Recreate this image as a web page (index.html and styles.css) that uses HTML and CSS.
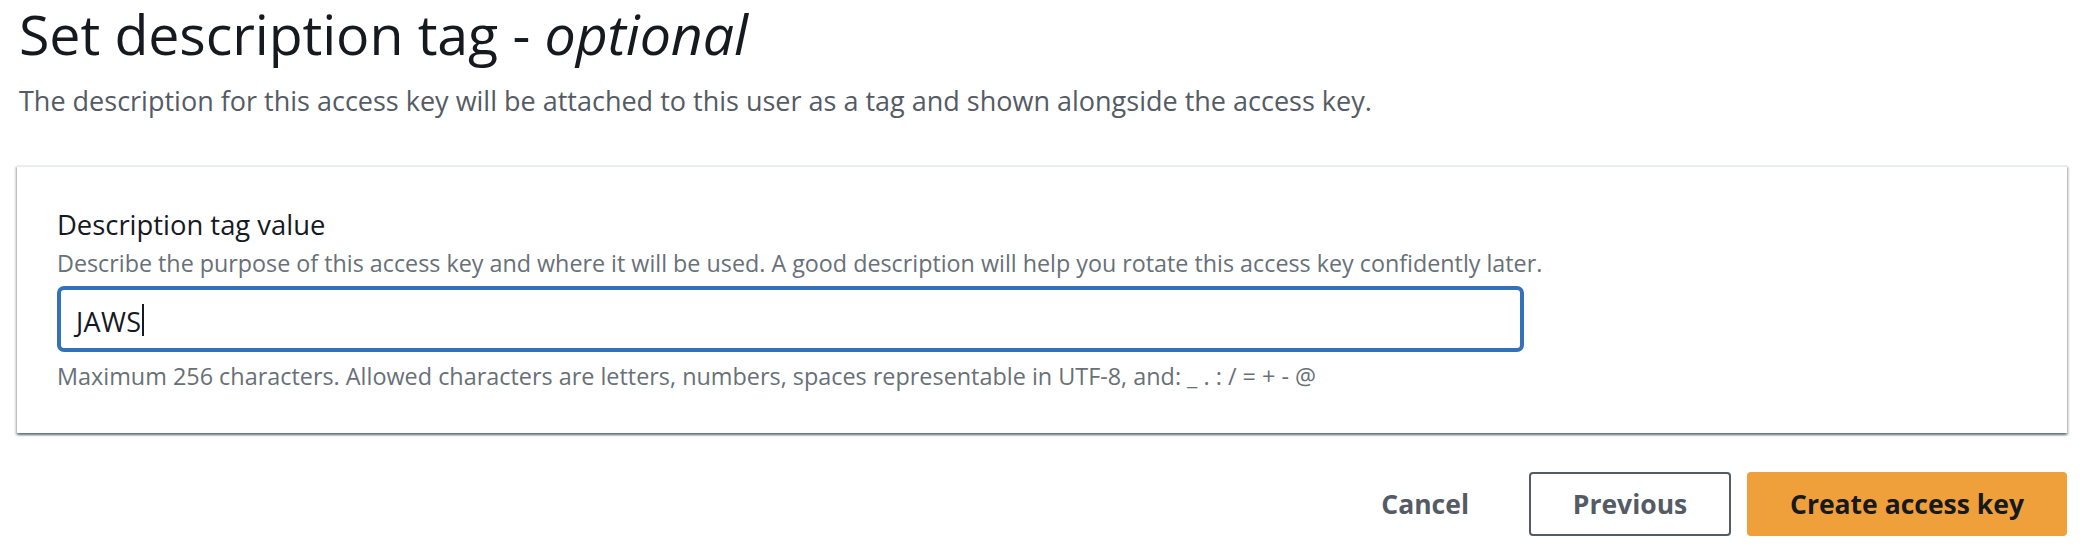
FILE: index.html
```html
<!DOCTYPE html>
<html lang="en">
<head>
<meta charset="utf-8">
<title>Set description tag</title>
<link rel="stylesheet" href="styles.css">
</head>
<body>
<div class="page">
  <header class="page-header">
    <h1 class="page-title">Set description tag - <em class="title-optional">optional</em></h1>
    <p class="page-desc">The description for this access key will be attached to this user as a tag and shown alongside the access key.</p>
  </header>

  <section class="card">
    <div class="field">
      <label class="field-label">Description tag value</label>
      <div class="field-help">Describe the purpose of this access key and where it will be used. A good description will help you rotate this access key confidently later.</div>
      <div class="field-input"><span class="input-value">JAWS</span><span class="caret"></span></div>
      <div class="field-constraint">Maximum 256 characters. Allowed characters are letters, numbers, spaces representable in UTF-8, and: _ . : / = + - @</div>
    </div>
  </section>

  <div class="actions">
    <button class="btn btn-link">Cancel</button>
    <button class="btn btn-normal">Previous</button>
    <button class="btn btn-primary">Create access key</button>
  </div>
</div>
</body>
</html>
```
FILE: styles.css
```css
* { box-sizing: border-box; }
html, body { margin: 0; padding: 0; background: #ffffff; }
body { font-family: "Open Sans", "Noto Sans", sans-serif; color: #16191f; }

.page {
  padding: 2px 23px 0 17px;
}

.page-header { padding-left: 2px; }

.page-title {
  margin: 0;
  font-size: 55.5px;
  line-height: 64px;
  font-weight: 400;
  color: #16191f;
  letter-spacing: -0.1px;
}
.title-optional { font-style: italic; }

.page-desc {
  margin: 15px 0 0 0;
  font-size: 27px;
  line-height: 40px;
  color: #545b64;
}

.card {
  margin-top: 44px;
  background: #fff;
  border-top: 2px solid #eaeded;
  box-shadow: 0 2px 2px 0 rgba(0, 28, 36, 0.45), 2px 2px 2px 0 rgba(0, 28, 36, 0.15), -2px 2px 2px 0 rgba(0, 28, 36, 0.15);
  padding: 38px 40px 39px 40px;
}

.field { display: flex; flex-direction: column; align-items: flex-start; }

.field-label {
  font-size: 27.4px;
  line-height: 40px;
  font-weight: 500;
  color: #16191f;
}

.field-help {
  font-size: 23.3px;
  line-height: 36px;
  color: #687078;
}

.field-input {
  margin-top: 5px;
  width: 1467px;
  height: 66px;
  border: 4px solid #3371b8;
  border-radius: 7px;
  padding: 5px 14px 0 15px;
  display: flex;
  align-items: center;
  font-size: 27px;
  line-height: 53px;
  color: #16191f;
}
.input-value { letter-spacing: 0.3px; }
.caret {
  display: inline-block;
  width: 2px;
  height: 32px;
  margin-left: 1px;
  margin-top: -4px;
  background: #16191f;
}

.field-constraint {
  margin-top: 6px;
  font-size: 23.4px;
  line-height: 36px;
  color: #687078;
}

.actions {
  margin-top: 39px;
  display: flex;
  justify-content: flex-end;
  gap: 16px;
}

.btn {
  height: 64px;
  font-family: "Open Sans", "Noto Sans", sans-serif;
  font-size: 26.5px;
  font-weight: 700;
  border-radius: 4px;
  border: 2px solid transparent;
  background: transparent;
  padding: 0 40px;
  cursor: pointer;
}
.btn-link { color: #545b64; margin-right: 2px; }
.btn-normal {
  width: 202px;
  padding: 0;
  border-color: #545b64;
  color: #545b64;
  background: #fff;
}
.btn-primary {
  width: 320px;
  padding: 0;
  background: #f0a03a;
  border-color: #f0a03a;
  color: #16191f;
}
```
